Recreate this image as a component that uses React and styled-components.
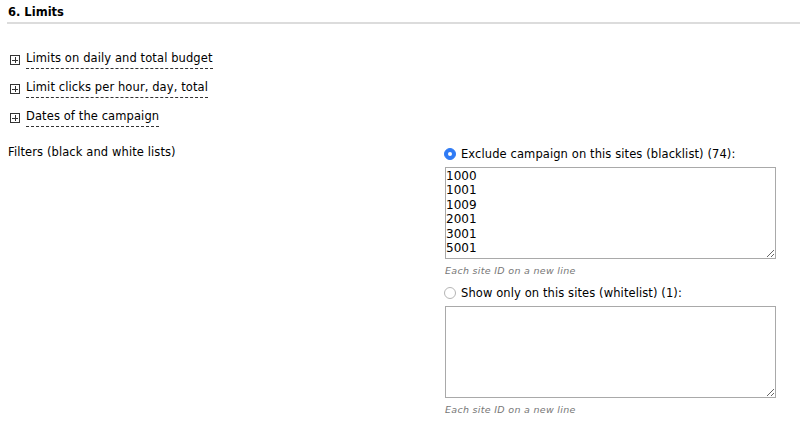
import React, { useState } from 'react';
import styled, { createGlobalStyle } from 'styled-components';

const GlobalStyle = createGlobalStyle`
  body {
    margin: 0;
    background: #fff;
    color: #000;
    font-family: "DejaVu Sans", Verdana, sans-serif;
    font-size: 11.5px;
  }
`;

const Page = styled.div`
  padding: 5px 0 0 8px;
`;

const SectionTitle = styled.h3`
  margin: 0 0 0 -1px;
  padding: 0 0 3px 1px;
  font-size: 11.5px;
  font-weight: bold;
  border-bottom: 2px solid #dcdcdc;
`;

const Toggles = styled.div`
  display: flex;
  flex-direction: column;
  align-items: flex-start;
  gap: 11px;
  padding: 27px 0 0 2px;
`;

const Toggle = styled.button`
  display: flex;
  align-items: center;
  gap: 6px;
  padding: 0;
  border: 0;
  background: none;
  font: inherit;
  color: #000;
  cursor: pointer;
`;

const PlusBox = styled.span`
  position: relative;
  width: 10px;
  height: 10px;
  border: 1px solid #333;
  box-sizing: border-box;
  flex: none;

  &::before, &::after {
    content: '';
    position: absolute;
    background: #333;
  }
  &::before { left: 1px; right: 1px; top: 3.5px; height: 1px; }
  &::after { top: 1px; bottom: 1px; left: 3.5px; width: 1px; }
`;

const ToggleLabel = styled.span`
  border-bottom: 1px dashed #333;
  padding-bottom: 3px;
  letter-spacing: 0.1px;
`;

const FilterRow = styled.div`
  display: grid;
  grid-template-columns: 436px 1fr;
  margin-top: 18px;
`;

const RowLabel = styled.div`
  letter-spacing: 0.1px;
`;

const Lists = styled.div`
  display: flex;
  flex-direction: column;
  width: 332px;
  padding-top: 2px;
`;

const RadioLine = styled.label`
  display: flex;
  align-items: center;
  gap: 5px;
  letter-spacing: 0.1px;
  cursor: pointer;
`;

const Radio = styled.span`
  width: 12px;
  height: 12px;
  border-radius: 50%;
  box-sizing: border-box;
  flex: none;
  background: ${p => (p.$checked ? '#2f7bf5' : '#fff')};
  border: 1px solid ${p => (p.$checked ? '#2f7bf5' : '#b5b5b5')};
  display: flex;
  align-items: center;
  justify-content: center;

  &::after {
    content: '';
    width: 4px;
    height: 4px;
    border-radius: 50%;
    background: #fff;
    display: ${p => (p.$checked ? 'block' : 'none')};
  }
`;

const Area = styled.textarea`
  margin: 6px 0 0 1px;
  width: 331px;
  height: 92px;
  box-sizing: border-box;
  border: 1px solid #a9a9a9;
  padding: 1px 0 0 0;
  font-family: "DejaVu Sans", Verdana, sans-serif;
  font-size: 12px;
  line-height: 14.4px;
  color: #000;
  resize: vertical;
  overflow: hidden;
`;

const Hint = styled.div`
  margin: 6px 0 0 1px;
  font-size: 9.5px;
  font-style: italic;
  color: #777;
  letter-spacing: 0.3px;
`;

const Gap = styled.div`
  height: 10px;
`;

const toggles = [
  'Limits on daily and total budget',
  'Limit clicks per hour, day, total',
  'Dates of the campaign',
];

export default function App() {
  const [mode, setMode] = useState('black');
  return (
    <Page>
      <GlobalStyle />
      <SectionTitle>6. Limits</SectionTitle>
      <Toggles>
        {toggles.map(t => (
          <Toggle key={t} type="button">
            <PlusBox />
            <ToggleLabel>{t}</ToggleLabel>
          </Toggle>
        ))}
      </Toggles>
      <FilterRow>
        <RowLabel>Filters (black and white lists)</RowLabel>
        <Lists>
          <RadioLine onClick={() => setMode('black')}>
            <Radio $checked={mode === 'black'} />
            Exclude campaign on this sites (blacklist) (74):
          </RadioLine>
          <Area defaultValue={'1000\n1001\n1009\n2001\n3001\n5001'} />
          <Hint>Each site ID on a new line</Hint>
          <Gap />
          <RadioLine onClick={() => setMode('white')}>
            <Radio $checked={mode === 'white'} />
            Show only on this sites (whitelist) (1):
          </RadioLine>
          <Area defaultValue="" />
          <Hint>Each site ID on a new line</Hint>
        </Lists>
      </FilterRow>
    </Page>
  );
}
